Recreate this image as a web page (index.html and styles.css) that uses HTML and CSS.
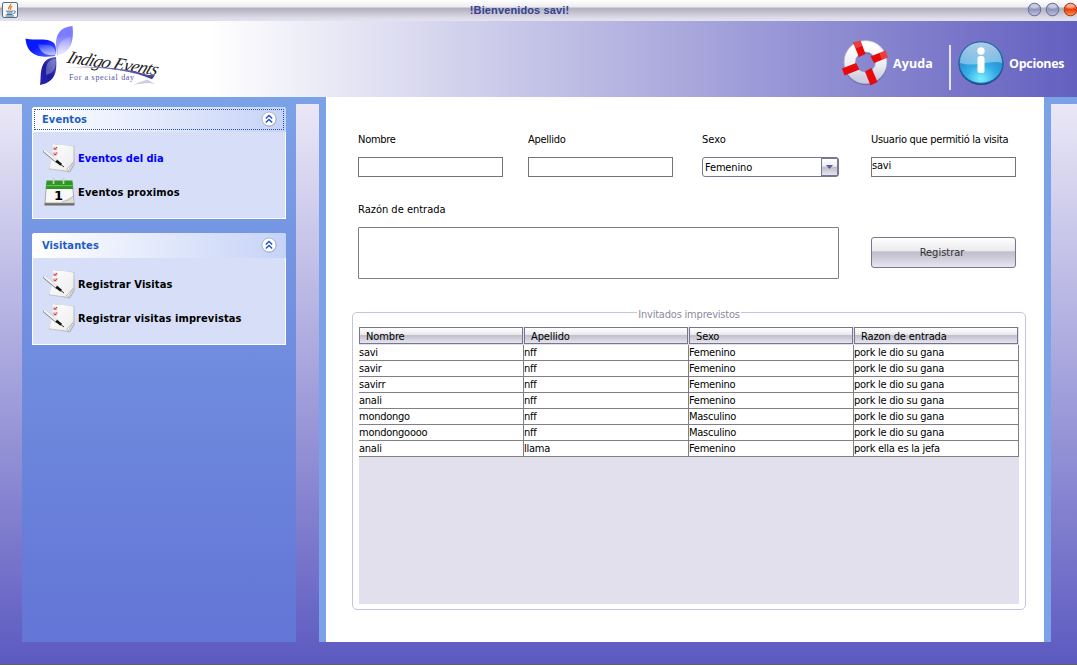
FILE: index.html
```html
<!DOCTYPE html>
<html lang="es">
<head>
<meta charset="utf-8">
<title>!Bienvenidos savi!</title>
<link rel="stylesheet" href="styles.css">
</head>
<body>
<svg class="defs" width="0" height="0">
  <defs>
    <linearGradient id="paper" x1="0" y1="0" x2="1" y2="1"><stop offset="0" stop-color="#fff"/><stop offset="1" stop-color="#ececec"/></linearGradient>
    <symbol id="note" viewBox="0 0 32 30">
      <path d="M7 25 27 29.500 31.500 22 31 5 12 2Z" fill="#8c8c94" opacity=".55"/>
      <path d="M12 1.500 22 3 31 3.500 30.800 21 26.500 28.500 6.500 26 9 18Z" fill="#f0f0f0" stroke="#b4b4ba" stroke-width=".7"/>
      <path d="M10 1.500 20 2 30 3.500 30 20 25.500 27.500 6.500 25 9.500 13Z" fill="url(#paper)"/>
      <path d="M30 19.500 25.500 27.500 23.500 26.500Z" fill="#fff" stroke="#a0a0a0" stroke-width=".7"/>
      <path d="M10.500 4h3.500v3h-3.500zM10.500 9.500h3.500v3h-3.500z" fill="#f7d8d8" stroke="#d8a8a8" stroke-width=".5"/>
      <path d="m11 5 1 1.500 2-2.500M11 10.500l1 1.500 2-2.500" fill="none" stroke="#d31515" stroke-width=".9"/>
      <path d="M2 8.500 14 18.500" stroke="#808086" stroke-width="3.400" stroke-linecap="round"/>
      <path d="M2 8 14 18" stroke="#f2f2f2" stroke-width="2.400" stroke-linecap="round"/>
      <path d="m13.200 17.800 5 4" stroke="#111" stroke-width="2.500"/>
      <path d="m17.500 21.300 3.500 2.700" stroke="#333"/>
    </symbol>
    <symbol id="fold" viewBox="0 0 16 16">
      <circle cx="8.200" cy="8.400" r="7.200" fill="#8c98b8"/>
      <circle cx="8" cy="8" r="7" fill="#fff" stroke="#a4acc4" stroke-width=".8"/>
      <path d="m4.800 7.500 3.200-3 3.200 3M4.800 11.500l3.200-3 3.200 3" fill="none" stroke="#1f50cc" stroke-width="1.400"/>
    </symbol>
    <linearGradient id="petalA" x1="0" y1="0" x2="1" y2="1"><stop offset=".4" stop-color="#0818ff"/><stop offset="1" stop-color="#5a70ff"/></linearGradient>
    <linearGradient id="petalB" x1="0" y1="0" x2="0" y2="1"><stop offset=".3" stop-color="#7b7cff"/><stop offset="1" stop-color="#c6c6ff"/></linearGradient>
    <linearGradient id="petalC" x1="1" y1="0" x2="0" y2="1"><stop offset="0" stop-color="#5c5cc0"/><stop offset=".5" stop-color="#1c1ca0"/><stop offset="1" stop-color="#2424b4"/></linearGradient>
    <linearGradient id="shine" x1="0" y1="0" x2="0" y2="1"><stop offset="0" stop-color="#fff" stop-opacity=".12"/><stop offset="1" stop-color="#fff" stop-opacity=".65"/></linearGradient>
    <linearGradient id="swoosh"><stop offset="0" stop-color="#a4a4dc"/><stop offset="1" stop-color="#3c3c94"/></linearGradient>
    <linearGradient id="ring" x1="0" y1="0" x2="0" y2="1"><stop offset="0" stop-color="#fff"/><stop offset=".6" stop-color="#ececf4"/><stop offset="1" stop-color="#cfcfe0"/></linearGradient>
    <radialGradient id="info" cx=".5" cy=".9" r=".85"><stop offset="0" stop-color="#7af0ff"/><stop offset=".4" stop-color="#35aee8"/><stop offset="1" stop-color="#1a72bc"/></radialGradient>
    <linearGradient id="gloss" x1="0" y1="0" x2="0" y2="1"><stop offset="0" stop-color="#fff" stop-opacity=".65"/><stop offset="1" stop-color="#fff" stop-opacity=".35"/></linearGradient>
    <linearGradient id="orb" x1="0" y1="0" x2="0" y2="1"><stop offset="0" stop-color="#c6cadf"/><stop offset=".5" stop-color="#8f95bc"/><stop offset="1" stop-color="#c0c5e0"/></linearGradient>
    <linearGradient id="orbRed" x1="0" y1="0" x2="0" y2="1"><stop offset="0" stop-color="#ffb08c"/><stop offset=".5" stop-color="#ec3b08"/><stop offset="1" stop-color="#ff9a50"/></linearGradient>
  </defs>
</svg>

<div class="window">
  <header class="titlebar">
    <svg class="java" width="16" height="16" viewBox="0 0 16 16">
      <rect x=".5" y=".5" width="15" height="15" rx="1.500" fill="#f4f6f8" stroke="#507088"/>
      <path d="M8.800 1.800C9.500 3.800 5.500 4.500 7 7.500M10.300 4.200c-2.600 1.400-2 2.200-1.300 3.600" fill="none" stroke="#ee7a14" stroke-width="1.300"/>
      <path d="M4 9.200h7M5 11h5.500M4.500 12.500h6M3.500 14h8.500M11.500 9c2.800-.5 2.300 2.200-.2 2.500" fill="none" stroke="#4a7190"/>
    </svg>
    <div class="caption">!Bienvenidos savi!</div>
    <svg class="controls" width="52" height="20" viewBox="0 0 52 20">
      <g fill="url(#orb)" stroke="#666c94"><circle cx="9.500" cy="9.500" r="6.300"/><circle cx="27.500" cy="9.500" r="6.300"/></g>
      <circle cx="45.500" cy="9.500" r="6.300" fill="url(#orbRed)" stroke="#a23a18"/>
      <g fill="#fff" opacity=".35"><ellipse cx="9.500" cy="6.500" rx="4" ry="2"/><ellipse cx="27.500" cy="6.500" rx="4" ry="2"/><ellipse cx="45.500" cy="6.500" rx="4" ry="2"/></g>
    </svg>
  </header>

  <div class="banner">
    <svg class="logo" width="150" height="70" viewBox="0 0 150 70">
      <path d="M5.500 17.500C13 20 28 16 34 22c3 4 2 9 1 13C22 37 7 36 5.500 17.500Z" fill="url(#petalA)"/>
      <path d="M18 23c8 1 13 0 16 4 2 3 1 5 1 7-9 1-15-2-17-11Z" fill="url(#shine)"/>
      <path d="M52.500 5C54 18 52 31 37 34.500 35 21 34 7 52.500 5Z" fill="url(#petalB)"/>
      <path d="M50.500 16C52 25 47 33 38 34.500 37 25 40 18 50.500 16Z" fill="url(#shine)"/>
      <path d="M36 36c1 12 1 25-16 28C22 57 17 37 36 36Z" fill="url(#petalC)"/>
      <path d="M35.500 38C36 45 35 52 26 54 26 45 26 39 35.500 38Z" fill="#fff" opacity=".28"/>
      <text class="brand" transform="translate(46 41.500) rotate(8) skewX(-14)" textLength="91" lengthAdjust="spacing">Indigo Events</text>
      <path d="M45 46.500C75 44 108 47 128 54l7 .2-3 4C112 49 78 45 45 46.500Z" fill="url(#swoosh)"/>
      <path d="M113 64c7-3 12-5 15-5l7 4-6-1c-5 0-11 1-16 2Z" fill="#9a9ac8" opacity=".5"/>
      <text class="tagline" x="49" y="59" textLength="65">For a special day</text>
    </svg>
    <nav class="actions">
      <a class="action">
        <svg width="46" height="46" viewBox="0 0 46 46">
          <circle cx="23.500" cy="23.500" r="15.700" fill="none" stroke="#4a4a90" stroke-opacity=".4" stroke-width="12"/>
          <circle cx="23.500" cy="22" r="15.700" fill="none" stroke="url(#ring)" stroke-width="11.500"/>
          <circle cx="23.500" cy="22" r="21.400" fill="none" stroke="#b4b4d0" stroke-width=".7"/>
          <circle cx="23.500" cy="22" r="10" fill="none" stroke="#9c9cc0" stroke-width=".8"/>
          <g fill="#e60a0a"><path d="m11 2.500 7.500-2L23.500 14l-6.500 3Z"/><path d="m43.500 10.500 2.500 7L32 23l-3.500-6.500Z"/><path d="m35.500 42-7 3.500L23 31.500l6.500-3.500Z"/><path d="m2.500 35.500-2.500-7L14 23l3.500 6.500Z"/></g>
          <path d="m11.500 2.500 7-2 2 5.500-7 2.500ZM43.500 10.500l2.500 7-6 2.500-2.500-7Z" fill="#fff" opacity=".22"/>
        </svg>
        <span class="actiontext help">Ayuda</span>
      </a>
      <i class="divider"></i>
      <a class="action">
        <svg width="46" height="46" viewBox="0 0 46 46">
          <ellipse cx="23" cy="24" rx="22.500" ry="21" fill="#2b4685"/>
          <ellipse cx="23" cy="22.500" rx="22" ry="20.800" fill="url(#info)" stroke="#1a68a8"/>
          <path d="M2 23C2 11 11 2.500 23 2.500S44 11 44 23C32 19 18 28 2 23Z" fill="url(#gloss)"/>
          <circle cx="23" cy="11" r="3.700" fill="#fff"/><rect x="19.500" y="16" width="7" height="17" rx="2.500" fill="#fff"/>
        </svg>
        <span class="actiontext options">Opciones</span>
      </a>
    </nav>
  </div>

  <div class="workspace">
    <aside class="sidebar">
      <section class="group">
        <h2 class="grouphead focused"><span class="wide">Eventos</span><svg width="16" height="16"><use href="#fold"/></svg></h2>
        <ul class="tasks">
          <li class="task current"><svg width="32" height="30"><use href="#note"/></svg><span>Eventos del dia</span></li>
          <li class="task"><svg width="32" height="30" viewBox="0 0 32 30">
            <path d="M1.500 26h30v2.500h-30Z" fill="#6e6e66"/>
            <path d="M3.500 6h26l1.500 20H2Z" fill="#f8f8f8" stroke="#999" stroke-width=".8"/>
            <path d="M3.500 3.500h26L30 12H3Z" fill="#2f9721"/><path d="M4 8h25.500v1.200H4Z" fill="#6cc05a"/>
            <path d="M10.500 1v6M20.500 1v6" stroke="#c7d3c7" stroke-width="1.600"/>
            <text class="daynum" x="11" y="23">1</text><path d="M19 24.500 30 19l.5 6Z" fill="#dcdcdc"/><path d="M19 24.500c5 0 8-2 11-5.500" fill="none" stroke="#aaa" stroke-width=".7"/>
          </svg><span class="wide2">Eventos proximos</span></li>
        </ul>
      </section>
      <section class="group">
        <h2 class="grouphead"><span>Visitantes</span><svg width="16" height="16"><use href="#fold"/></svg></h2>
        <ul class="tasks">
          <li class="task"><svg width="32" height="30"><use href="#note"/></svg><span class="wide3">Registrar Visitas</span></li>
          <li class="task"><svg width="32" height="30"><use href="#note"/></svg><span class="wide3">Registrar visitas imprevistas</span></li>
        </ul>
      </section>
    </aside>

    <main class="content">
      <form class="visit">
        <label class="field"><span class="tight">Nombre</span><span class="box"></span></label>
        <label class="field"><span class="tight">Apellido</span><span class="box"></span></label>
        <label class="field"><span>Sexo</span><span class="combo"><span class="value">Femenino</span><span class="arrow"><svg width="8" height="5"><path d="M0 0h7L3.500 4Z" fill="#5a5a9c"/></svg></span></span></label>
        <label class="field"><span class="tight">Usuario que permitió la visita</span><span class="box">savi</span></label>
        <label class="field reason"><span>Razón de entrada</span><span class="area"></span></label>
        <button class="submit" type="button">Registrar</button>
      </form>
      <section class="guests">
        <div class="legend">Invitados imprevistos</div>
        <div class="tablepane">
          <div class="row head"><div>Nombre</div><div>Apellido</div><div>Sexo</div><div>Razon de entrada</div></div>
          <div class="row"><div>savi</div><div>nff</div><div>Femenino</div><div>pork le dio su gana</div></div>
          <div class="row"><div>savir</div><div>nff</div><div>Femenino</div><div>pork le dio su gana</div></div>
          <div class="row"><div>savirr</div><div>nff</div><div>Femenino</div><div>pork le dio su gana</div></div>
          <div class="row"><div>anali</div><div>nff</div><div>Femenino</div><div>pork le dio su gana</div></div>
          <div class="row"><div>mondongo</div><div>nff</div><div>Masculino</div><div>pork le dio su gana</div></div>
          <div class="row"><div>mondongoooo</div><div>nff</div><div>Masculino</div><div>pork le dio su gana</div></div>
          <div class="row"><div>anali</div><div>llama</div><div>Femenino</div><div>pork ella es la jefa</div></div>
        </div>
      </section>
    </main>
  </div>
</div>
</body>
</html>
```
FILE: styles.css
```css
* { box-sizing: border-box; }
body { margin: 0; overflow: hidden; font: 11px/14px "DejaVu Sans Condensed", "DejaVu Sans", sans-serif; color: #000; }
.defs { position: absolute; }
.window { width: 1077px; height: 665px; display: flex; flex-direction: column; border-bottom: 1px solid #606068; background: linear-gradient(#eae8f6, #5c5ac0) 0 104px / 100% 560px no-repeat; }

.titlebar { height: 21px; display: flex; align-items: flex-start; background: linear-gradient(#fff 0, #ececf0 7px, #b3b1bf 8px, #b8b6c4 10px, #dedce8 18px, #e4e2ee 21px); }
.java { margin: 2px 0 0 2px; }
.caption { flex: 1; padding: 3px 4px 0 0; text-align: center; font: bold 11px/14px "Liberation Sans", Arial, sans-serif; letter-spacing: .12px; color: #36428f; }
.controls { flex: none; }

.banner { height: 76px; display: flex; justify-content: space-between; background: linear-gradient(90deg, #fff 210px, #6360c0); }
.logo { margin-left: 20px; overflow: visible; }
.brand { font: italic 18px "Liberation Serif", serif; fill: #222; }
.tagline { font: 8px "Liberation Serif", serif; fill: #5656a8; }
.actions { display: flex; padding-right: 13px; }
.action { display: flex; align-items: center; color: #fff; }
.action svg { margin-bottom: -8px; }
.actiontext { width: 55px; margin: 10px 0 0 5px; font: bold 12.5px/16px "Open Sans", sans-serif; letter-spacing: -.3px; white-space: nowrap; }
.help { width: 57px; letter-spacing: .1px; }
.divider { width: 2px; height: 45px; margin: 24px 7px 0 -1px; background: #e4e4f8; }

.workspace { height: 545px; display: flex; background: linear-gradient(#7ba2e7, #7ba2e7) 0 0 / 100% 7px no-repeat; }
.sidebar { width: 274px; margin: 0 23px 0 22px; padding: 10px; display: flex; flex-direction: column; gap: 14px; background: linear-gradient(#7ba2e7, #6375d6); }
.group { height: 112px; border: 1px solid #fff; border-top: 0; border-radius: 3px 3px 0 0; background: #d6dff7; }
.grouphead { height: 25px; margin: 0 -1px; padding: 0 9px 1px 10px; display: flex; align-items: center; justify-content: space-between; border-radius: 3px 3px 0 0; background: linear-gradient(90deg, #fff, #c6d3f7); font: bold 11px/14px "DejaVu Sans Condensed", sans-serif; color: #215dc6; }
.grouphead span { padding-top: 2px; letter-spacing: .1px; }
.focused { outline: 1px dotted #2450b8; outline-offset: -3px; }
.tasks { list-style: none; margin: 0; padding: 11px 10px 0; display: flex; flex-direction: column; gap: 4px; }
.task { height: 30px; display: flex; align-items: center; gap: 3px; font-weight: bold; white-space: nowrap; }
.task span { padding-top: 1px; }
.current { color: #00f; }
.wide2 { letter-spacing: .15px; }
.wide3 { letter-spacing: .1px; }
.daynum { font: bold 13px "DejaVu Sans", sans-serif; }

.content { width: 732px; padding: 36px 18px 0 26px; border: solid #7ba2e7; border-width: 0 7px; background: #fff; }
.visit { display: grid; grid-template-columns: 170px 174px 169px 145px; row-gap: 26px; align-content: start; height: 179px; padding-left: 6px; }
.field { display: flex; flex-direction: column; gap: 10px; white-space: nowrap; }
.tight { letter-spacing: -.27px; }
.box { width: 145px; height: 20px; border: 1px solid #747478; line-height: 16px; letter-spacing: -.2px; }
.combo { width: 137px; height: 20px; display: flex; border: 1px solid #77778f; border-radius: 3px; }
.value { flex: 1; padding: 3px 0 0 2px; letter-spacing: -.15px; }
.arrow { width: 17px; display: flex; align-items: center; justify-content: center; border: 1px solid #77778f; background: linear-gradient(#fff 0, #eeeef2 45%, #bdbcca 50%, #e6e4f0); }
.reason { grid-column: span 3; }
.area { width: 481px; height: 52px; border: 1px solid #808084; border-radius: 1px; }
.submit { width: 145px; height: 31px; margin-top: 34px; padding: 1px 3px 0 0; border: 1px solid #77768c; border-radius: 3px; background: linear-gradient(#fff 0, #ebebef 43%, #c1c0cc 48%, #c3c2ce 55%, #e7e5f0 100%); font: inherit; color: #333; }

.guests { width: 674px; height: 298px; border: 1px solid #c6c4d8; border-radius: 5px; padding: 0 6px; }
.legend { width: max-content; height: 14px; margin: -6px auto 6px; padding: 0 1px; background: #fff; color: #8c8a9e; line-height: 16px; letter-spacing: -.2px; }
.tablepane { width: 660px; height: 277px; background: #e2e0ec; }
.row { display: grid; grid-template-columns: repeat(4, 165px); height: 16px; line-height: 15px; letter-spacing: -.25px; }
.row > div { height: 16px; background: #fff; border: solid #808080; border-width: 0 1px 1px 0; white-space: nowrap; }
.head { height: 18px; line-height: 16px; letter-spacing: -.12px; }
.head > div { width: 164px; height: 17px; border: 1px solid #77768c; padding: 1px 0 0 6px; background: linear-gradient(#fff 0, #ebebef 43%, #c1c0cc 48%, #c3c2ce 55%, #e7e5f0 100%); }
```
